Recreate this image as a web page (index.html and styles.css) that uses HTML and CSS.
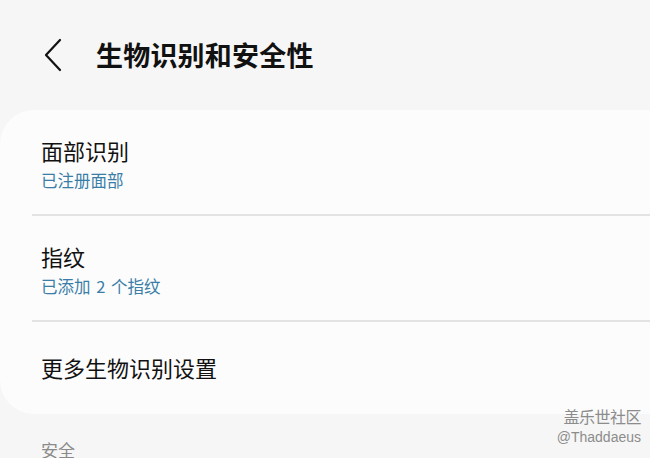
FILE: index.html
```html
<!DOCTYPE html>
<html lang="zh-CN">
<head>
<meta charset="utf-8">
<link rel="stylesheet" href="styles.css">
</head>
<body>
<div class="page">
  <header class="header">
    <span class="back">
      <svg width="20" height="34" viewBox="0 0 20 34"><path d="M17 2 L3 17 L17 32" fill="none" stroke="#111" stroke-width="2.2" stroke-linecap="round" stroke-linejoin="round"/></svg>
    </span>
    <h1 class="title">生物识别和安全性</h1>
  </header>
  <section class="card">
    <div class="item">
      <div class="item-title">面部识别</div>
      <div class="item-sub">已注册面部</div>
    </div>
    <div class="divider"></div>
    <div class="item">
      <div class="item-title">指纹</div>
      <div class="item-sub">已添加 2 个指纹</div>
    </div>
    <div class="divider"></div>
    <div class="item item-single">
      <div class="item-title">更多生物识别设置</div>
    </div>
  </section>
  <div class="section-label">安全</div>
  <div class="watermark">
    <div class="wm-name">盖乐世社区</div>
    <div class="wm-user">@Thaddaeus</div>
  </div>
</div>
</body>
</html>
```

FILE: styles.css
```css
html, body {
  margin: 0;
  padding: 0;
  background: #f6f6f6;
}
body {
  font-family: "Noto Sans CJK SC", "Noto Sans", sans-serif;
  color: #111;
  overflow: hidden;
}
.page {
  position: relative;
  width: 650px;
  height: 458px;
  overflow: hidden;
}
.header {
  height: 110px;
  display: flex;
  align-items: center;
  padding-left: 43px;
  box-sizing: border-box;
  padding-bottom: 0;
}
.back {
  display: flex;
  width: 20px;
  height: 34px;
}
.title {
  margin: 0 0 0 33px;
  font-size: 27px;
  font-weight: 700;
  line-height: 34px;
  color: #111;
  letter-spacing: 0.2px;
}
.card {
  background: #fcfcfc;
  border-radius: 34px 0 0 34px;
  margin-right: -40px;
}
.item {
  padding: 25px 41px 23px;
}
.item-single {
  padding: 30px 41px 32px;
}
.item-title {
  font-size: 22px;
  line-height: 30px;
  color: #111;
}
.item-sub {
  margin-top: 4px;
  font-size: 16.5px;
  line-height: 22px;
  color: #3a7ea8;
  word-spacing: 2px;
}
.divider {
  height: 2px;
  background: #e3e3e3;
  margin-left: 32px;
}
.section-label {
  padding: 24px 41px 0;
  font-size: 17px;
  line-height: 24px;
  color: #8a8a8a;
}
.watermark {
  position: absolute;
  right: 9px;
  top: 404px;
  text-align: right;
  color: #8c8c8c;
}
.wm-name {
  font-size: 16px;
  line-height: 24px;
  letter-spacing: -0.5px;
}
.wm-user {
  font-family: "Liberation Sans", Arial, sans-serif;
  font-size: 14px;
  line-height: 18px;
}
```
